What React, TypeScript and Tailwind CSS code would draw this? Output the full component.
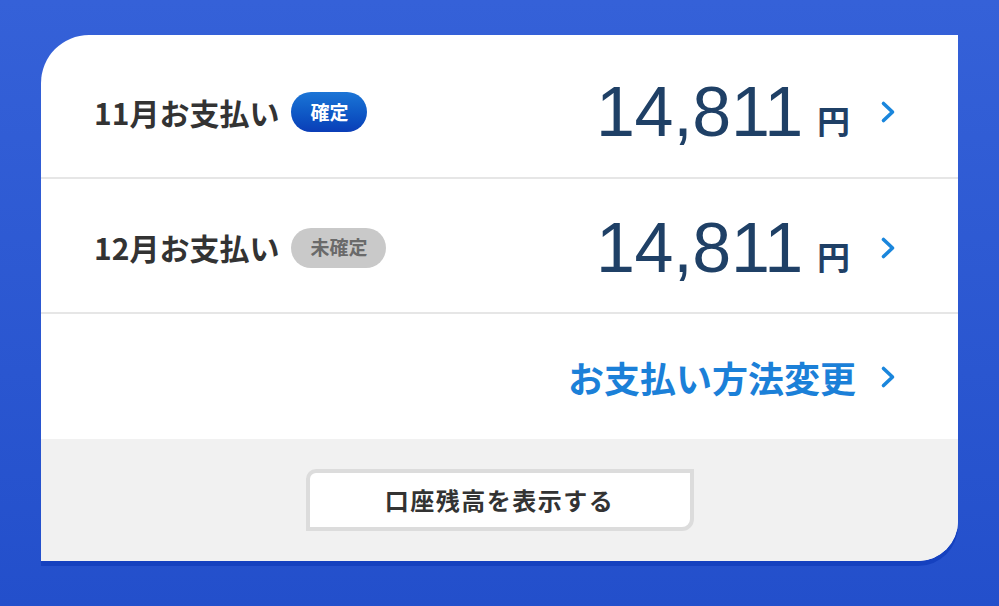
import React from "react"

const jp = { fontFamily: '"Noto Sans CJK JP", "Noto Sans", sans-serif' }
const num = { fontFamily: '"Liberation Sans", Arial, sans-serif' }

function Chevron() {
    return (
        <svg width="16" height="24" viewBox="0 0 16 24" className="shrink-0">
            <path d="M3.5 3.5 L12.5 12 L3.5 20.5" fill="none" stroke="#1a86dc" strokeWidth="3.6" strokeLinecap="round" strokeLinejoin="round" />
        </svg>
    )
}

function PaymentRow({ month, fixed, className }: { month: string; fixed: boolean; className: string }) {
    return (
        <div className={`flex items-center justify-between pl-[53px] pr-[62px] ${className}`}>
            <div className="flex items-center gap-[12px]">
                <span className="text-[30px] font-bold text-[#333333]" style={jp}>
                    {month}月お支払い
                </span>
                {fixed ? (
                    <span
                        className="h-[40px] px-[19px] flex items-center rounded-full bg-gradient-to-b from-[#1c75d6] to-[#0b3db7] text-white text-[19px] font-bold"
                        style={jp}
                    >
                        確定
                    </span>
                ) : (
                    <span
                        className="h-[40px] px-[19px] flex items-center rounded-full bg-[#c9c9c9] text-[#6a6a6a] text-[19px] font-bold"
                        style={jp}
                    >
                        未確定
                    </span>
                )}
            </div>
            <div className="flex items-center gap-[30px]">
                <div className="flex items-end gap-[14px] text-[#1f4066]">
                    <span className="text-[70px] leading-none tracking-[-0.3px]" style={num}>
                        14,811
                    </span>
                    <span className="text-[33px] font-bold leading-none mb-[10px]" style={jp}>
                        円
                    </span>
                </div>
                <Chevron />
            </div>
        </div>
    )
}

export default function App() {
    return (
        <div className="w-[999px] h-[606px] overflow-hidden bg-gradient-to-b from-[#3561d8] to-[#234fcb] pt-[35px] px-[41px]">
            <div className="bg-white rounded-tl-[48px] rounded-br-[40px] overflow-hidden shadow-[0_5px_0_#1541bf]">
                <PaymentRow month="11" fixed className="h-[142px] pt-[12px]" />
                <div className="h-[2px] bg-[#e6e6e6]" />
                <PaymentRow month="12" fixed={false} className="h-[133px] pt-[4px]" />
                <div className="h-[2px] bg-[#e6e6e6]" />
                <div className="h-[125px] flex items-center justify-end gap-[24px] pr-[62px]">
                    <span className="text-[36px] font-bold text-[#1b80d8]" style={jp}>
                        お支払い方法変更
                    </span>
                    <Chevron />
                </div>
                <div className="h-[122px] bg-[#f1f1f1] flex items-center justify-center">
                    <button
                        className="w-[388px] h-[62px] bg-white border-[4px] border-[#dcdcdc] rounded-tl-[10px] rounded-br-[12px] flex items-center justify-center text-[24px] font-bold text-[#333333] tracking-[1.5px]"
                        style={jp}
                    >
                        口座残高を表示する
                    </button>
                </div>
            </div>
        </div>
    )
}
